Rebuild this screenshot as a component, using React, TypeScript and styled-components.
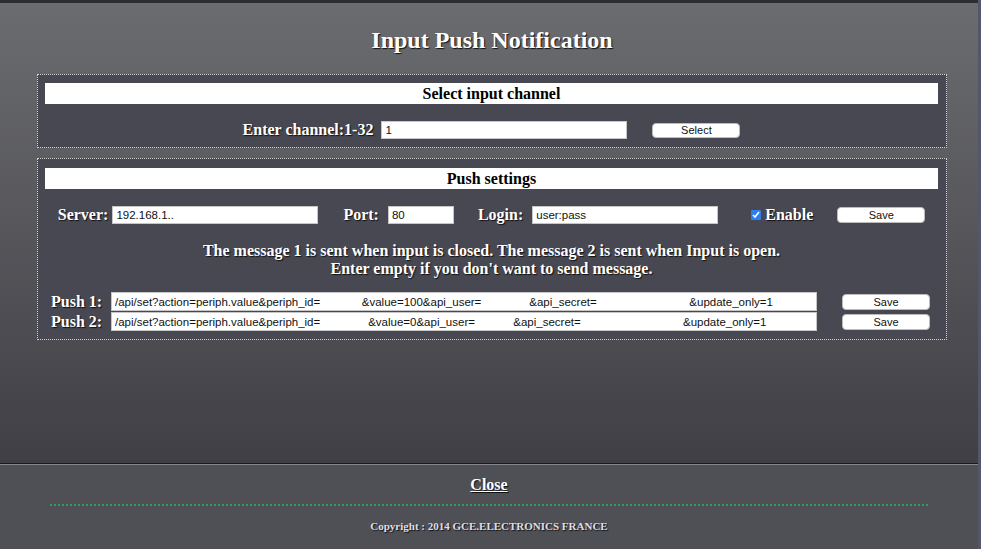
import React from 'react';
import styled, { createGlobalStyle } from 'styled-components';

const GlobalStyle = createGlobalStyle`
  html, body { margin: 0; padding: 0; background: #4f5056; }
  body { font-family: "Liberation Serif", "Times New Roman", serif; }
`;

const Page = styled.div`
  width: 981px;
  height: 549px;
  box-sizing: border-box;
  border-right: 3px solid #56566a;
  display: flex;
  flex-direction: column;
  overflow: hidden;
`;

const Main = styled.main`
  box-sizing: border-box;
  height: 463px;
  flex-shrink: 0;
  border-top: 3px solid #2d2d30;
  background: linear-gradient(#6b6c70, #403f45);
  padding: 23px 31px 0 37px;
  display: flex;
  flex-direction: column;
  gap: 10px;
`;

const Title = styled.h1`
  margin: 0 0 10px;
  font-size: 24px;
  line-height: 28px;
  font-weight: bold;
  text-align: center;
  color: #fff;
  text-shadow: 1px 1px 1px #111;
`;

const Panel = styled.section<{ $top?: number }>`
  border: 1px dotted #d4d4d4;
  background: #484853;
  padding: ${({ $top }) => $top ?? 8}px 8px 8px 7px;
`;

const HeaderBar = styled.div`
  background: #fff;
  height: 21px;
  line-height: 21px;
  text-align: center;
  font-size: 16px;
  font-weight: bold;
  color: #000;
`;

const Row = styled.div`
  display: flex;
  justify-content: center;
  align-items: center;
  height: 18px;
  margin-top: 17px;
`;

const Label = styled.label<{ $ml?: number; $mr?: number }>`
  margin-left: ${({ $ml }) => $ml ?? 0}px;
  margin-right: ${({ $mr }) => $mr ?? 0}px;
  font-size: 16px;
  font-weight: bold;
  color: #fff;
  text-shadow: 1px 1px 1px #111;
  white-space: nowrap;
`;

const TextInput = styled.input<{ $w: number; $h?: number }>`
  width: ${({ $w }) => $w}px;
  height: ${({ $h }) => $h ?? 18}px;
  box-sizing: border-box;
  margin: 0;
  padding: 0 3px;
  border: 1px solid #c6c6c6;
  background: #fff;
  font-family: "Liberation Sans", Arial, sans-serif;
  font-size: 11.5px;
  color: #111;
  outline: none;
`;

const Button = styled.button<{ $ml?: number; $h?: number }>`
  margin-left: ${({ $ml }) => $ml ?? 0}px;
  width: 88px;
  height: ${({ $h }) => $h ?? 16}px;
  padding: 0;
  border: 1px solid #bcbcbc;
  border-radius: 4px;
  background: #fff;
  font-family: "Liberation Sans", Arial, sans-serif;
  font-size: 11px;
  color: #111;
  cursor: pointer;
`;

const Check = styled.input`
  margin: 0 4px 0 33px;
  width: 10px;
  height: 10px;
  accent-color: #2b7df2;
`;

const Message = styled.p`
  margin: 18px 0 0;
  font-size: 16px;
  line-height: 18px;
  font-weight: bold;
  text-align: center;
  color: #fff;
  text-shadow: 1px 1px 1px #111;
`;

const PushGrid = styled.div`
  display: grid;
  grid-template-columns: 60px 706px 88px;
  row-gap: 1px;
  align-items: center;
  margin-top: 14px;
  padding-left: 6px;

  & > button { margin-left: 25px; }
`;

const PushLabel = styled(Label)`
  line-height: 19px;
`;

const Divider = styled.div`
  border-top: 1px solid #1b1b1d;
  border-bottom: 1px solid #85858c;
`;

const Footer = styled.footer`
  flex: 1;
  background: #4f5056;
  display: flex;
  flex-direction: column;
  align-items: center;
  padding-top: 11px;
`;

const CloseLink = styled.a`
  font-size: 16px;
  line-height: 18px;
  font-weight: bold;
  color: #fff;
  text-decoration: underline;
  text-shadow: 1px 1px 1px #111;
`;

const GreenRule = styled.div`
  width: 878px;
  margin-top: 10px;
  border-top: 2px dotted #1fe65c;
  transform: scaleY(0.5);
`;

const Copyright = styled.div`
  margin-top: 13px;
  font-size: 11px;
  line-height: 14px;
  font-weight: bold;
  color: #dcdfe8;
  text-shadow: 1px 1px 1px #111;
`;

const push1 =
  '/api/set?action=periph.value&periph_id=             &value=100&api_user=               &api_secret=                             &update_only=1';
const push2 =
  '/api/set?action=periph.value&periph_id=               &value=0&api_user=            &api_secret=                                &update_only=1';

const App: React.FC = () => (
  <>
    <GlobalStyle />
    <Page>
      <Main>
        <Title>Input Push Notification</Title>

        <Panel>
          <HeaderBar>Select input channel</HeaderBar>
          <Row>
            <Label $mr={8}>Enter channel:1-32</Label>
            <TextInput $w={246} defaultValue="1" />
            <Button $ml={25} $h={15}>Select</Button>
          </Row>
        </Panel>

        <Panel $top={9}>
          <HeaderBar>Push settings</HeaderBar>
          <Row>
            <Label $mr={4}>Server:</Label>
            <TextInput $w={206} defaultValue="192.168.1.." />
            <Label $ml={25} $mr={9}>Port:</Label>
            <TextInput $w={66} defaultValue="80" />
            <Label $ml={24} $mr={9}>Login:</Label>
            <TextInput $w={186} defaultValue="user:pass" />
            <Check type="checkbox" defaultChecked />
            <Label>Enable</Label>
            <Button $ml={24}>Save</Button>
          </Row>
          <Message>
            The message 1 is sent when input is closed. The message 2 is sent when Input is open.
            <br />
            Enter empty if you don't want to send message.
          </Message>
          <PushGrid>
            <PushLabel>Push 1:</PushLabel>
            <TextInput $w={706} $h={19} defaultValue={push1} />
            <Button>Save</Button>
            <PushLabel>Push 2:</PushLabel>
            <TextInput $w={706} $h={19} defaultValue={push2} />
            <Button>Save</Button>
          </PushGrid>
        </Panel>
      </Main>
      <Divider />
      <Footer>
        <CloseLink href="#">Close</CloseLink>
        <GreenRule />
        <Copyright>Copyright : 2014 GCE.ELECTRONICS FRANCE</Copyright>
      </Footer>
    </Page>
  </>
);

export default App;
